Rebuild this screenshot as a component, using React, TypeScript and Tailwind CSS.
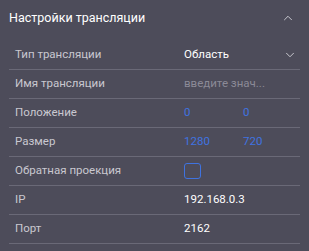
import { ChevronUp, ChevronDown } from 'lucide-react';

// Stream settings panel
function Row({ label, children }: { label: string; children?: React.ReactNode }) {
  return (
    <div className="flex h-[29px] items-center border-b border-[#6a6977]">
      <div className="w-[175px] shrink-0 pl-[6px] text-[11.5px] text-[#c9c8d0]">{label}</div>
      <div className="flex flex-1 items-center text-[11.5px]">{children}</div>
    </div>
  );
}

export default function App() {
  return (
    <div
      className="h-[251px] w-[309px] bg-[#4d4c5a] pt-[6px]"
      style={{ fontFamily: 'Roboto, "Noto Sans", sans-serif' }}
    >
      <div className="flex h-[24px] items-center justify-between pl-[9px] pr-[14px]">
        <span className="text-[12.5px] text-white">Настройки трансляции</span>
        <ChevronUp className="h-[14px] w-[14px] text-[#d8d8de]" strokeWidth={1.5} />
      </div>
      <div className="mx-[9px] mt-[11px]">
        <Row label="Тип трансляции">
          <span className="text-white">Область</span>
          <ChevronDown className="ml-auto mr-[3px] h-[14px] w-[14px] text-[#d8d8de]" strokeWidth={1.5} />
        </Row>
        <Row label="Имя трансляции">
          <span className="text-[#8b8a97]">введите знач...</span>
        </Row>
        <Row label="Положение">
          <span className="w-[59px] text-[#3f73e0]">0</span>
          <span className="text-[#3f73e0]">0</span>
        </Row>
        <Row label="Размер">
          <span className="w-[59px] text-[#3f73e0]">1280</span>
          <span className="text-[#3f73e0]">720</span>
        </Row>
        <Row label="Обратная проекция">
          <div className="h-[16px] w-[17px] rounded-[3px] border border-[#3f73e0]" />
        </Row>
        <Row label="IP">
          <span className="text-white">192.168.0.3</span>
        </Row>
        <Row label="Порт">
          <span className="text-white">2162</span>
        </Row>
      </div>
    </div>
  );
}
